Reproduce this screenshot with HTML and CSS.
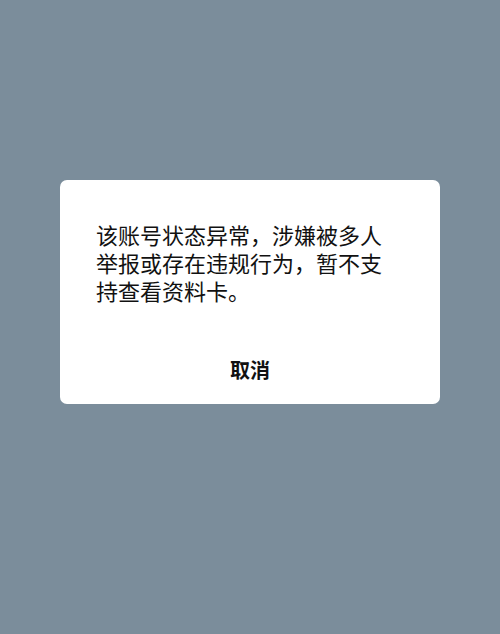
FILE: index.html
```html
<!DOCTYPE html>
<html lang="zh-CN">
<head>
    <meta charset="UTF-8">
    <meta name="viewport" content="width=device-width, initial-scale=1.0">
    <title>提示</title>
    <link rel="stylesheet" href="styles.css">
</head>
<body>
<div class="mask">
    <div class="dialog">
        <p class="msg">该账号状态异常，涉嫌被多人举报或存在违规行为，暂不支持查看资料卡。</p>
        <div class="btn">取消</div>
    </div>
</div>
</body>
</html>
```

FILE: styles.css
```css
html, body{
    margin: 0;
    height: 100%;
}
body{
    background: #7b8d9b;
    font-family: "Noto Sans CJK SC", "Noto Sans", sans-serif;
    color: #111;
}
.mask{
    display: flex;
    justify-content: center;
    padding-top: 180px;
}
.dialog{
    width: 380px;
    background: #fff;
    border-radius: 7px;
}
.dialog .msg{
    margin: 0;
    padding: 40px 40px 0 36px;
    font-size: 22px;
    line-height: 28px;
}
.dialog .btn{
    margin-top: 34px;
    padding: 20px 0 22px;
    text-align: center;
    font-size: 20px;
    line-height: 24px;
    font-weight: bold;
}
```
